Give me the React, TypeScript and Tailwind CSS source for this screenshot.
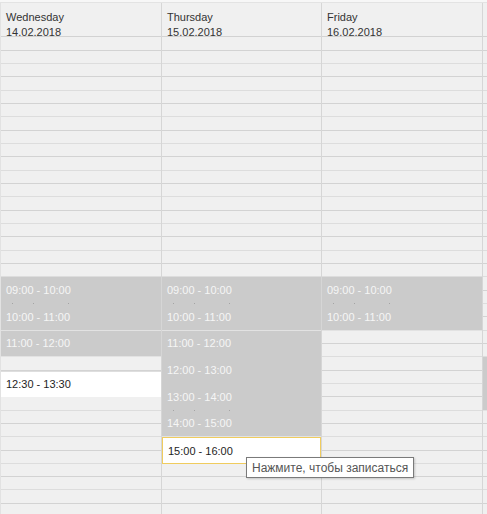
import React from "react";

const ROW = 40 / 3;
const NROWS = 36;

type Ev = {
  start: number;
  rows: number;
  labels: string[];
  kind: "grey" | "white" | "selected";
  dots?: number[];
};

type Col = {
  name: string;
  date: string;
  width: number;
  first?: boolean;
  events: Ev[];
  nameClass?: string;
};

const cols: Col[] = [
  {
    name: "Wednesday",
    date: "14.02.2018",
    width: 160,
    first: true,
    events: [
      { start: 18, rows: 4, labels: ["09:00 - 10:00", "10:00 - 11:00"], kind: "grey", dots: [0] },
      { start: 22, rows: 2, labels: ["11:00 - 12:00"], kind: "grey" },
      { start: 25, rows: 2, labels: ["12:30 - 13:30"], kind: "white", dots: [0] },
    ],
  },
  {
    name: "Thursday",
    date: "15.02.2018",
    width: 159,
    events: [
      { start: 18, rows: 4, labels: ["09:00 - 10:00", "10:00 - 11:00"], kind: "grey", dots: [0] },
      {
        start: 22,
        rows: 8,
        labels: ["11:00 - 12:00", "12:00 - 13:00", "13:00 - 14:00", "14:00 - 15:00"],
        kind: "grey",
        dots: [2],
      },
      { start: 30, rows: 2, labels: ["15:00 - 16:00"], kind: "selected" },
    ],
  },
  {
    name: "Friday",
    date: "16.02.2018",
    width: 160,
    events: [
      { start: 18, rows: 4, labels: ["09:00 - 10:00", "10:00 - 11:00"], kind: "grey", dots: [0] },
    ],
  },
  {
    name: "Saturday",
    date: "17.02.2018",
    width: 160,
    nameClass: "text-[#c88a3a]",
    events: [{ start: 24, rows: 4, labels: [], kind: "grey" }],
  },
];

function Event({ ev }: { ev: Ev }) {
  const base =
    ev.kind === "grey"
      ? "bg-[#cbcbcb] text-[#f6f6f6] border-b border-[#e2e2e2]"
      : ev.kind === "white"
      ? "bg-white text-[#1e1e1e] border-t border-[#dedede]"
      : "bg-white text-[#1e1e1e] border border-[#f0cc5e]";
  const dot = ev.kind === "grey" ? "bg-[#a4a4a4]" : "bg-[#8a8a8a]";
  return (
    <div
      className={`absolute left-0 right-0 flex flex-col overflow-hidden ${base}`}
      style={{ top: ev.start * ROW, height: ev.rows * ROW }}
    >
      {ev.labels.map((l, i) => (
        <div
          key={i}
          className="relative flex shrink-0 items-center pl-[5px] text-[11px] leading-[13px]"
          style={{ height: ROW * 2 }}
        >
          <span>{l}</span>
          {ev.dots?.includes(i) && (
            <>
              <span className={`absolute bottom-0 left-[11px] h-px w-px ${dot}`} />
              <span className={`absolute bottom-0 left-[32px] h-px w-px ${dot}`} />
              <span className={`absolute bottom-0 left-[67px] h-px w-px ${dot}`} />
            </>
          )}
        </div>
      ))}
    </div>
  );
}

function Column({ col }: { col: Col }) {
  return (
    <div
      className={`flex shrink-0 flex-col border-r border-[#d6d6d6] ${
        col.first ? "border-l border-l-[#e2e2e2]" : ""
      }`}
      style={{ width: col.width + (col.first ? 2 : 1) }}
    >
      <div className="flex h-[34.33px] shrink-0 flex-col border-b border-[#d2d2d2] pl-[5px] pt-[7px] text-[11px] leading-[15px] text-[#333]">
        <span className={`whitespace-nowrap ${col.nameClass ?? ""}`}>{col.name}</span>
        <span className={`whitespace-nowrap ${col.nameClass ?? ""}`}>{col.date}</span>
      </div>
      <div className="relative">
        {Array.from({ length: NROWS }).map((_, i) => (
          <div
            key={i}
            className={`border-b ${i % 2 === 0 ? "border-[#d3d3d3]" : "border-[#dddddd]"}`}
            style={{ height: ROW }}
          />
        ))}
        {col.events.map((ev, i) => (
          <Event key={i} ev={ev} />
        ))}
      </div>
    </div>
  );
}

export default function App() {
  return (
    <div
      className="relative h-[514px] w-[487px] overflow-hidden bg-[#f0f0f0]"
      style={{ fontFamily: '"Liberation Sans", Arial, sans-serif' }}
    >
      <div className="h-[2px] bg-[#f7f7f7]" />
      <div className="flex border-t border-[#e3e3e3]">
        {cols.map((c, i) => (
          <Column key={i} col={c} />
        ))}
      </div>
      <div className="absolute left-[246px] top-[457px] flex h-[21px] items-center whitespace-nowrap border border-[#7a7a7a] bg-white px-[5px] text-[12px] text-[#555] shadow-[1px_1px_2px_rgba(0,0,0,0.18)]">
        Нажмите, чтобы записаться
      </div>
    </div>
  );
}
